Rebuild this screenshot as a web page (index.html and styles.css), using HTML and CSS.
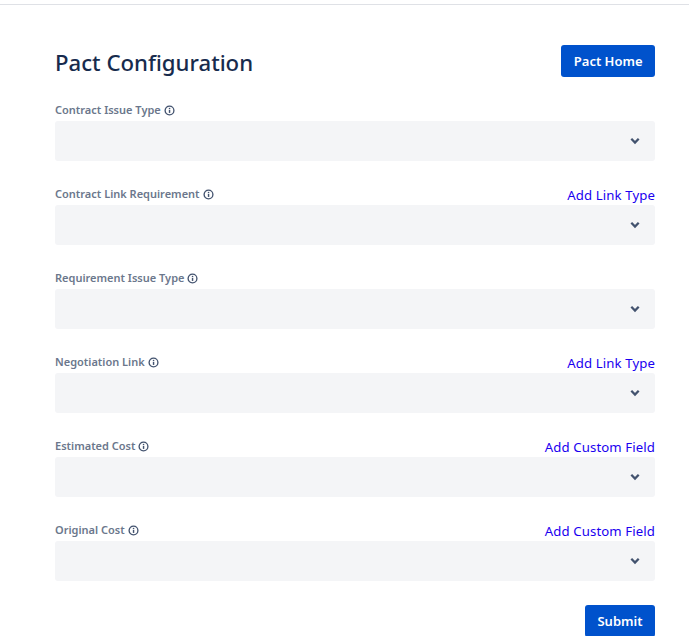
FILE: index.html
```html
<!DOCTYPE html>
<html lang="en">
<head>
<meta charset="utf-8">
<title>Pact Configuration</title>
<link rel="stylesheet" href="styles.css">
</head>
<body>
<main class="page">
  <header class="head">
    <h1 class="title">Pact Configuration</h1>
    <button class="btn" type="button">Pact Home</button>
  </header>
  <form class="form">
    <div class="field">
      <div class="label-row">
        <label class="label">Contract Issue Type <svg class="info" viewBox="0 0 10 10"><circle cx="5" cy="5" r="4" fill="none" stroke="currentColor" stroke-width="1.2"/><rect x="4.4" y="4.5" width="1.3" height="2.7" fill="currentColor"/><rect x="4.4" y="2.6" width="1.3" height="1.2" fill="currentColor"/></svg></label>
      </div>
      <div class="select"><svg class="chev" viewBox="0 0 10 8"><path d="M1.3 1.8 5 5.5l3.7-3.7" fill="none" stroke="currentColor" stroke-width="2.3"/></svg></div>
    </div>
    <div class="field">
      <div class="label-row">
        <label class="label">Contract Link Requirement <svg class="info" viewBox="0 0 10 10"><circle cx="5" cy="5" r="4" fill="none" stroke="currentColor" stroke-width="1.2"/><rect x="4.4" y="4.5" width="1.3" height="2.7" fill="currentColor"/><rect x="4.4" y="2.6" width="1.3" height="1.2" fill="currentColor"/></svg></label>
        <a class="link" href="#">Add Link Type</a>
      </div>
      <div class="select"><svg class="chev" viewBox="0 0 10 8"><path d="M1.3 1.8 5 5.5l3.7-3.7" fill="none" stroke="currentColor" stroke-width="2.3"/></svg></div>
    </div>
    <div class="field">
      <div class="label-row">
        <label class="label">Requirement Issue Type <svg class="info" viewBox="0 0 10 10"><circle cx="5" cy="5" r="4" fill="none" stroke="currentColor" stroke-width="1.2"/><rect x="4.4" y="4.5" width="1.3" height="2.7" fill="currentColor"/><rect x="4.4" y="2.6" width="1.3" height="1.2" fill="currentColor"/></svg></label>
      </div>
      <div class="select"><svg class="chev" viewBox="0 0 10 8"><path d="M1.3 1.8 5 5.5l3.7-3.7" fill="none" stroke="currentColor" stroke-width="2.3"/></svg></div>
    </div>
    <div class="field">
      <div class="label-row">
        <label class="label">Negotiation Link <svg class="info" viewBox="0 0 10 10"><circle cx="5" cy="5" r="4" fill="none" stroke="currentColor" stroke-width="1.2"/><rect x="4.4" y="4.5" width="1.3" height="2.7" fill="currentColor"/><rect x="4.4" y="2.6" width="1.3" height="1.2" fill="currentColor"/></svg></label>
        <a class="link" href="#">Add Link Type</a>
      </div>
      <div class="select"><svg class="chev" viewBox="0 0 10 8"><path d="M1.3 1.8 5 5.5l3.7-3.7" fill="none" stroke="currentColor" stroke-width="2.3"/></svg></div>
    </div>
    <div class="field">
      <div class="label-row">
        <label class="label">Estimated Cost <svg class="info" viewBox="0 0 10 10"><circle cx="5" cy="5" r="4" fill="none" stroke="currentColor" stroke-width="1.2"/><rect x="4.4" y="4.5" width="1.3" height="2.7" fill="currentColor"/><rect x="4.4" y="2.6" width="1.3" height="1.2" fill="currentColor"/></svg></label>
        <a class="link" href="#">Add Custom Field</a>
      </div>
      <div class="select"><svg class="chev" viewBox="0 0 10 8"><path d="M1.3 1.8 5 5.5l3.7-3.7" fill="none" stroke="currentColor" stroke-width="2.3"/></svg></div>
    </div>
    <div class="field">
      <div class="label-row">
        <label class="label">Original Cost <svg class="info" viewBox="0 0 10 10"><circle cx="5" cy="5" r="4" fill="none" stroke="currentColor" stroke-width="1.2"/><rect x="4.4" y="4.5" width="1.3" height="2.7" fill="currentColor"/><rect x="4.4" y="2.6" width="1.3" height="1.2" fill="currentColor"/></svg></label>
        <a class="link" href="#">Add Custom Field</a>
      </div>
      <div class="select"><svg class="chev" viewBox="0 0 10 8"><path d="M1.3 1.8 5 5.5l3.7-3.7" fill="none" stroke="currentColor" stroke-width="2.3"/></svg></div>
    </div>
    <div class="actions">
      <button class="btn" type="submit">Submit</button>
    </div>
  </form>
</main>
</body>
</html>
```
FILE: styles.css
```css
html, body {
  margin: 0;
  padding: 0;
  height: 636px;
  overflow: hidden;
  background: #fff;
}
body {
  font-family: "Noto Sans", "Open Sans", sans-serif;
}
.page {
  margin-top: 4px;
  border-top: 1px solid #dfe1e6;
  padding: 40px 34px 0 55px;
}
.head {
  display: flex;
  justify-content: space-between;
  align-items: center;
  height: 32px;
}
.title {
  margin: 0;
  padding-top: 3px;
  font-size: 22.2px;
  font-weight: 500;
  line-height: 32px;
  color: #172b4d;
}
.btn {
  height: 32px;
  padding: 0 12.5px;
  border: 0;
  border-radius: 3px;
  background: #0052cc;
  color: #fff;
  font: 600 13px/32px "Noto Sans", "Open Sans", sans-serif;
}
.form {
  display: flex;
  flex-direction: column;
  gap: 24px;
  margin-top: 24px;
}
.field {
  display: flex;
  flex-direction: column;
}
.label-row {
  display: flex;
  justify-content: space-between;
  align-items: flex-end;
  height: 20px;
}
.label {
  display: flex;
  align-items: center;
  gap: 3px;
  align-self: flex-start;
  font-size: 11px;
  font-weight: 600;
  line-height: 18px;
  color: #6b778c;
}
.info {
  width: 11px;
  height: 11px;
  color: #42526e;
}
.link {
  font-size: 13.2px;
  letter-spacing: 0.1px;
  line-height: 20px;
  color: #1a00f0;
  text-decoration: none;
}
.select {
  display: flex;
  align-items: center;
  justify-content: flex-end;
  height: 40px;
  padding-right: 15px;
  border-radius: 3px;
  background: #f4f5f7;
}
.chev {
  width: 10px;
  height: 8px;
  color: #42526e;
}
.actions {
  display: flex;
  justify-content: flex-end;
}
```
